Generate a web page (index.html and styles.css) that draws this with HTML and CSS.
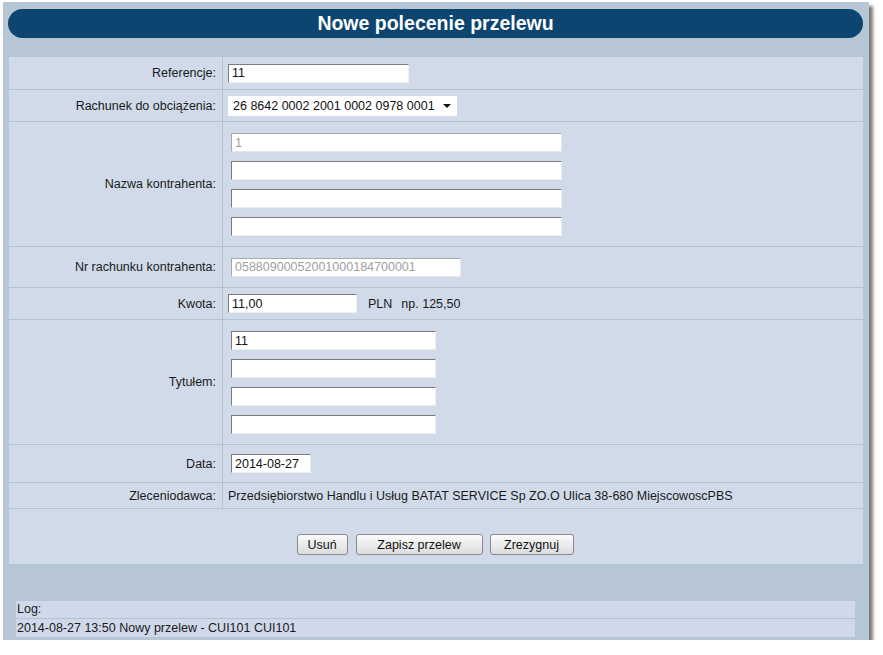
FILE: index.html
```html
<!doctype html>
<html lang="pl">
    <head>
        <meta charset="UTF-8" />
        <title>Nowe polecenie przelewu</title>
        <link rel="stylesheet" href="styles.css">
    </head>
    <body>
        <div class="window">
            <div class="title-bar">Nowe polecenie przelewu</div>

            <form class="panel" id="transferForm">
                <div class="row h32">
                    <label class="label" for="ref">Referencje:</label>
                    <div class="value">
                        <input type="text" id="ref" class="field w-ref" value="11" />
                    </div>
                </div>
                <div class="row h31">
                    <label class="label" for="account">Rachunek do obciążenia:</label>
                    <div class="value">
                        <span class="select-wrap">
                            <select id="account" class="select">
                                <option>26 8642 0002 2001 0002 0978 0001</option>
                            </select>
                        </span>
                    </div>
                </div>
                <div class="row h124">
                    <label class="label">Nazwa kontrahenta:</label>
                    <div class="value stack">
                        <input type="text" class="field w-name shift" value="1" disabled />
                        <input type="text" class="field w-name shift" />
                        <input type="text" class="field w-name shift" />
                        <input type="text" class="field w-name shift" />
                    </div>
                </div>
                <div class="row h40">
                    <label class="label">Nr rachunku kontrahenta:</label>
                    <div class="value">
                        <input type="text" class="field w-nrb shift" value="05880900052001000184700001" disabled />
                    </div>
                </div>
                <div class="row h31">
                    <label class="label" for="amount">Kwota:</label>
                    <div class="value">
                        <input type="text" id="amount" class="field w-amount" value="11,00" />
                        <span class="currency">PLN</span>
                        <span class="hint">np. 125,50</span>
                    </div>
                </div>
                <div class="row h124">
                    <label class="label">Tytułem:</label>
                    <div class="value stack">
                        <input type="text" class="field w-title shift" value="11" />
                        <input type="text" class="field w-title shift" />
                        <input type="text" class="field w-title shift" />
                        <input type="text" class="field w-title shift" />
                    </div>
                </div>
                <div class="row h37">
                    <label class="label" for="date">Data:</label>
                    <div class="value">
                        <input type="text" id="date" class="field w-date shift" value="2014-08-27" />
                    </div>
                </div>
                <div class="row h25">
                    <div class="label">Zleceniodawca:</div>
                    <div class="value">Przedsiębiorstwo Handlu i Usług BATAT SERVICE Sp ZO.O Ulica 38-680 MiejscowoscPBS</div>
                </div>
                <div class="buttons">
                    <button type="button" class="btn w-del">Usuń</button>
                    <button type="submit" class="btn w-save">Zapisz przelew</button>
                    <button type="button" class="btn w-cancel">Zrezygnuj</button>
                </div>
            </form>

            <div class="log">
                <div class="log-row">Log:</div>
                <div class="log-row">2014-08-27 13:50 Nowy przelew - CUI101 CUI101</div>
            </div>
        </div>
    </body>
</html>
```

FILE: styles.css
```css
body {
    margin: 0;
    background-color: white;
    font-family: "Liberation Sans", Arial, sans-serif;
    font-size: 12.5px;
    color: #1a1a1a;
}

.window {
    margin: 2px 0 0 3px;
    width: 866px;
    height: 638px;
    box-sizing: border-box;
    padding-top: 7px;
    background-color: #b6c6d5;
    box-shadow: 4px 4px 3px #7d7d7d;
}

.title-bar {
    margin: 0 6px 0 5px;
    height: 29px;
    line-height: 29px;
    border-radius: 15px;
    background-color: #0b4570;
    color: white;
    font-size: 19.5px;
    font-weight: bold;
    text-align: center;
}

.panel {
    margin: 19px 0 0 6px;
    width: 854px;
    background-color: #d0dae9;
}

.row {
    display: grid;
    grid-template-columns: 214px 1fr;
    border-bottom: 1px solid #b3c2d3;
}

.h32 { height: 32px; }
.h31 { height: 31px; }
.h124 { height: 124px; }
.h40 { height: 40px; }
.h37 { height: 37px; }
.h25 { height: 25px; }

.label {
    display: flex;
    align-items: center;
    justify-content: flex-end;
    padding-right: 6px;
    border-right: 1px solid #b3c2d3;
    box-sizing: border-box;
}

.value {
    display: flex;
    align-items: center;
    padding-left: 5px;
    white-space: nowrap;
}

.stack {
    flex-direction: column;
    align-items: flex-start;
    justify-content: center;
    gap: 9px;
    padding-top: 1px;
}

.field {
    height: 19px;
    box-sizing: border-box;
    padding: 0 3px;
    border: 1px solid;
    border-color: #7b7b7b #eeeeee #eeeeee #7b7b7b;
    background-color: white;
    font-family: "Liberation Sans", Arial, sans-serif;
    font-size: 12.5px;
    color: #111;
    outline: none;
}

.field:disabled {
    background-color: white;
    color: #a0a0a0;
    border-color: #a9a9a9 #e6e6e6 #e6e6e6 #a9a9a9;
}

.shift { margin-left: 3px; }

.w-ref { width: 181px; }
.w-name { width: 331px; }
.w-nrb { width: 230px; }
.w-amount { width: 129px; }
.w-title { width: 205px; }
.w-date { width: 80px; }

.select-wrap {
    position: relative;
    display: inline-block;
}

.select {
    appearance: none;
    width: 229px;
    height: 20px;
    padding: 0 0 0 5px;
    border: none;
    background-color: white;
    font-family: "Liberation Sans", Arial, sans-serif;
    font-size: 12.5px;
    color: #111;
    outline: none;
}

.select-wrap::after {
    content: "";
    position: absolute;
    right: 6px;
    top: 8px;
    border-left: 4px solid transparent;
    border-right: 4px solid transparent;
    border-top: 4px solid #111;
    pointer-events: none;
}

.currency {
    margin-left: 11px;
}

.hint {
    margin-left: 9px;
}

.buttons {
    display: flex;
    justify-content: center;
    gap: 7px;
    height: 55px;
    box-sizing: border-box;
    padding: 25px 2px 0 0;
}

.btn {
    height: 21px;
    padding: 0;
    border: 1px solid #8a8a8a;
    border-radius: 3px;
    background: linear-gradient(#fbfbfb, #dcdcdc);
    font-family: "Liberation Sans", Arial, sans-serif;
    font-size: 12.5px;
    color: #111;
    cursor: pointer;
}

.btn:hover {
    background: linear-gradient(#ffffff, #e8e8e8);
}

.w-del { width: 51px; margin-right: 1px; }
.w-save { width: 127px; }
.w-cancel { width: 84px; }

.log {
    margin: 37px 0 0 13px;
    width: 839px;
    background-color: #cfd9ea;
}

.log-row {
    height: 17px;
    line-height: 17px;
    padding-left: 1px;
}

.log-row + .log-row {
    height: 18px;
    line-height: 18px;
    border-top: 1px solid #b3c2d3;
}
```
